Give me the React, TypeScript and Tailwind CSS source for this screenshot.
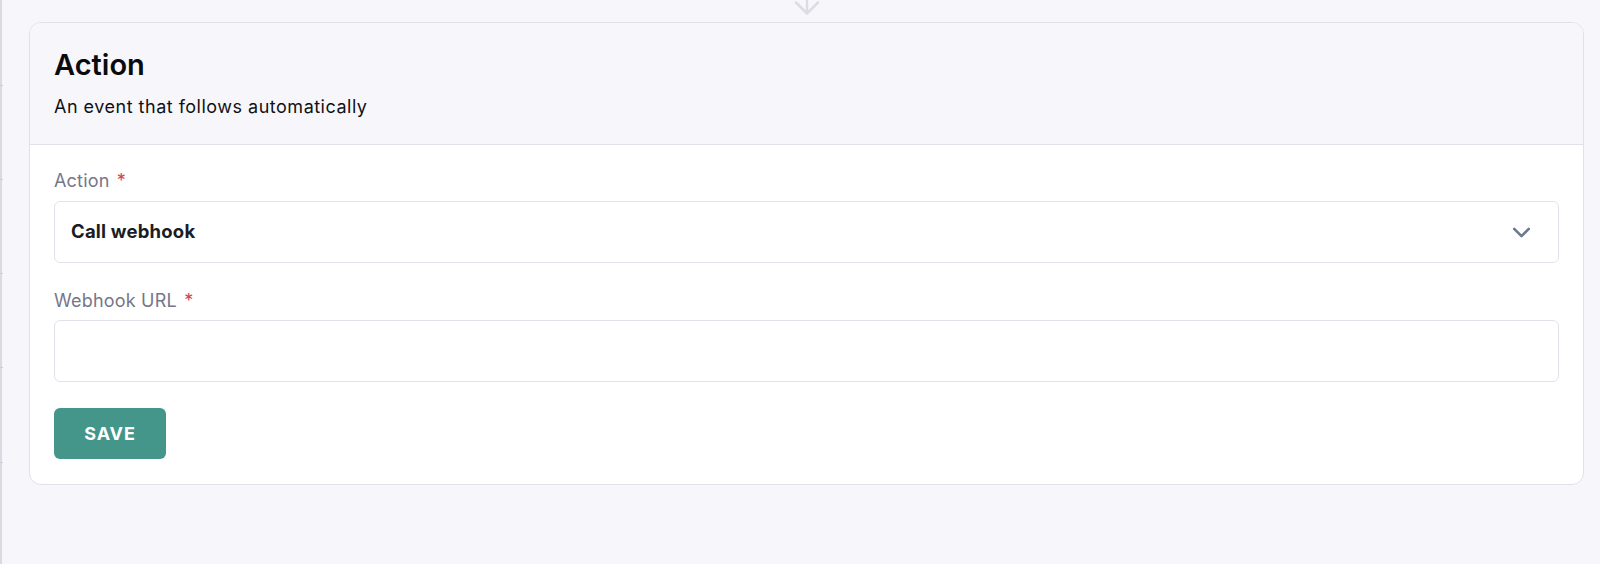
import { ChevronDown } from 'lucide-react'

const font = { fontFamily: 'Inter, "Liberation Sans", sans-serif' }

const Label = ({ text }: { text: string }) => (
  <label className="block h-7 text-[18px] leading-7 tracking-[0.2px] text-[#76768a]">
    {text} <span className="ml-0.5 text-[#d1434d]">*</span>
  </label>
)

// rows of the list that sits behind, only its edge shows
const rows = [86, 94, 94, 94, 95, 110]

const App = () => {
  return (
    <div className="flex min-h-[564px] w-full bg-[#f7f7fb]" style={font}>
      <div className="flex w-[3px] flex-col">
        {rows.map((h, i) => (
          <div key={i} className="flex flex-col">
            <div className="w-[2px] bg-[#dadae2]" style={{ height: h - 1 }} />
            {i < rows.length - 1 && <div className="h-px w-[3px] bg-[#cdcdd6]" />}
          </div>
        ))}
      </div>

      <div className="flex-1 pl-[26px] pr-4">
        <div className="flex h-[22px] justify-center overflow-hidden">
          <svg width="26" height="16" viewBox="0 0 26 16" fill="none">
            <path
              d="M13 -4V13M2 2.5L13 13.5L24 2.5"
              stroke="#dcdce6"
              strokeWidth="2.5"
              strokeLinecap="round"
              strokeLinejoin="round"
            />
          </svg>
        </div>

        <div className="overflow-hidden rounded-xl border border-[#e1e1e9] bg-white">
          <div className="border-b border-[#e1e1e9] bg-[#f7f7fb] px-6 pb-[25px] pt-6">
            <h2 className="text-[29px] font-semibold leading-9 text-[#0b0b0f]">
              Action
            </h2>
            <p className="mt-3 text-[18px] leading-6 tracking-[0.5px] text-[#111114]">
              An event that follows automatically
            </p>
          </div>

          <div className="px-6 pb-[25px] pt-[22px]">
            <Label text="Action" />
            <div className="mt-[6px] flex h-[62px] items-center justify-between rounded-md border border-[#e1e1e9] bg-white pl-4 pr-[22px]">
              <span className="text-[18.5px] font-bold tracking-[0.2px] text-[#1c1c22]">
                Call webhook
              </span>
              <ChevronDown
                className="h-[29px] w-[29px] text-[#6b7a90]"
                strokeWidth={2.2}
              />
            </div>

            <div className="mt-6">
              <Label text="Webhook URL" />
              <input
                type="text"
                className="mt-[5px] block h-[62px] w-full rounded-md border border-[#e1e1e9] bg-white px-4 text-[18px] outline-none"
              />
            </div>

            <button className="mt-[26px] h-[51px] w-[112px] rounded-md bg-[#44968a] text-[18px] font-bold uppercase tracking-wider text-white">
              Save
            </button>
          </div>
        </div>
      </div>
    </div>
  )
}

export default App
